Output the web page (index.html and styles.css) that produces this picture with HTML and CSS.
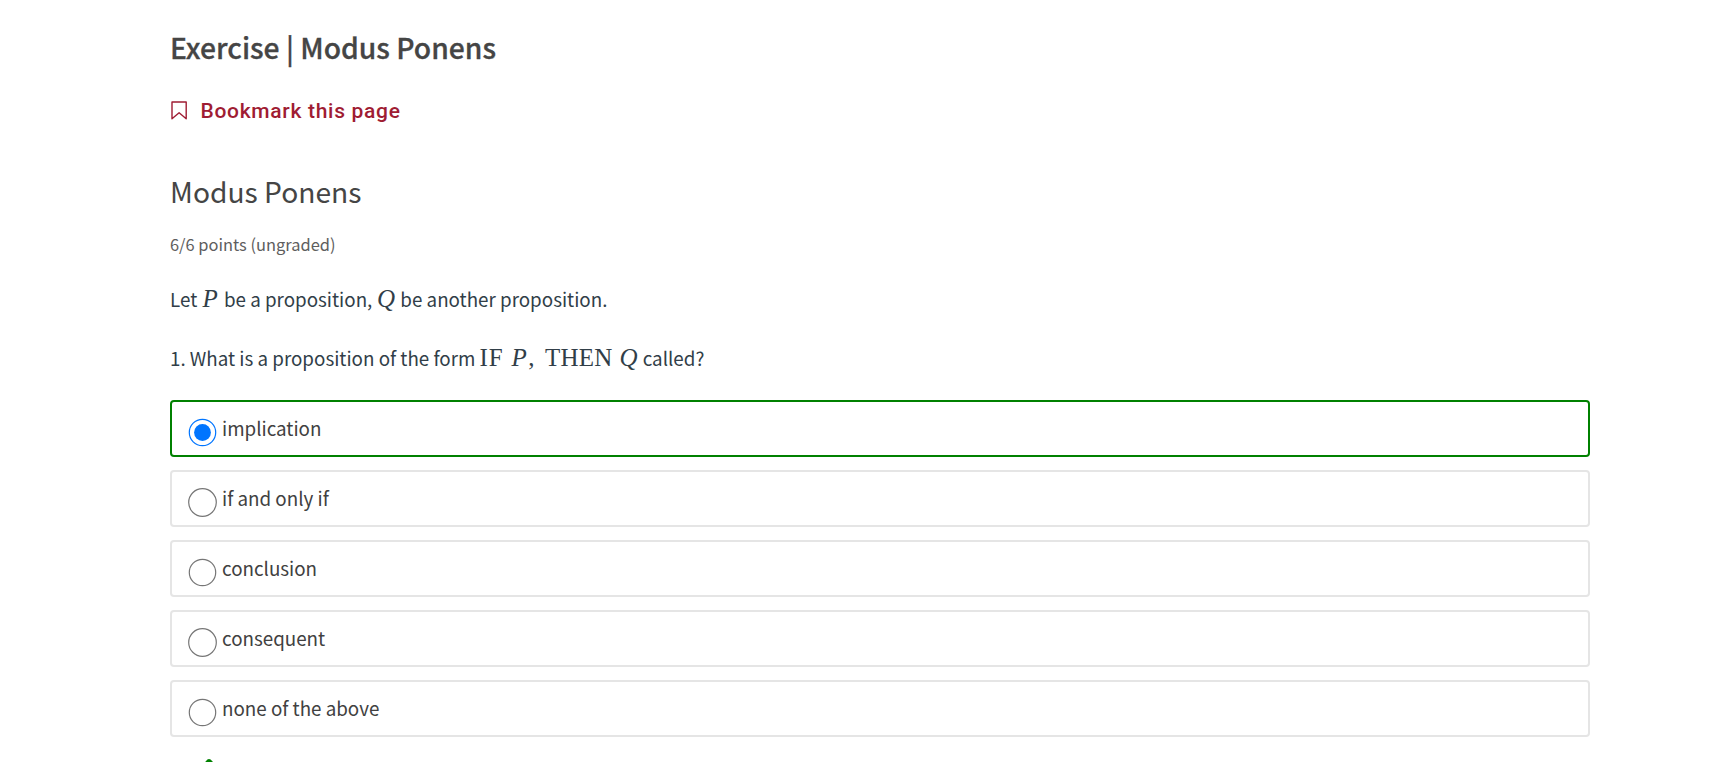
FILE: index.html
```html
<!DOCTYPE html>
<html lang="en">
<head>
<meta charset="utf-8">
<title>Exercise | Modus Ponens</title>
<link rel="stylesheet" href="styles.css">
</head>
<body>
<main class="page">
  <h1 class="title"><span>Exercise | Modus Ponens</span></h1>
  <a class="bookmark">
    <svg class="bookmark-icon" width="16" height="19" viewBox="0 0 16 19" fill="none" stroke="currentColor" stroke-width="1.4"><path d="M1 1H15.2V17.8L8.1 11.8L1 17.8Z" stroke-linejoin="round"/></svg>
    <span>Bookmark this page</span>
  </a>
  <h2 class="subtitle"><span>Modus Ponens</span></h2>
  <p class="points"><span>6/6 points (ungraded)</span></p>
  <p class="text"><span>Let</span> <i class="math p">P</i> <span>be a proposition,</span> <i class="math q">Q</i> <span>be another proposition.</span></p>
  <p class="text question"><span>1. What is a proposition of the form</span> <span class="math if">IF</span><i class="math p p2">P</i><span class="math comma">,</span><span class="math then">THEN</span><i class="math q q2">Q</i> <span>called?</span></p>
  <div class="choices">
    <label class="choice correct"><svg class="radio" width="31" height="31"><circle class="ring" cx="15.5" cy="15.5" r="13.2"/><circle class="dot" cx="15.5" cy="15.5" r="8.4"/></svg><span>implication</span></label>
    <label class="choice"><svg class="radio" width="31" height="31"><circle class="ring" cx="15.5" cy="15.5" r="13.8"/></svg><span>if and only if</span></label>
    <label class="choice"><svg class="radio" width="31" height="31"><circle class="ring" cx="15.5" cy="15.5" r="13.2"/></svg><span>conclusion</span></label>
    <label class="choice"><svg class="radio" width="31" height="31"><circle class="ring" cx="15.5" cy="15.5" r="13.8"/></svg><span>consequent</span></label>
    <label class="choice"><svg class="radio" width="31" height="31"><circle class="ring" cx="15.5" cy="15.5" r="13.2"/></svg><span>none of the above</span></label>
  </div>
  <svg class="check" width="30" height="24" viewBox="0 0 30 24"><path d="M2 13L6 9L11 14L22.4 1.6Q24 0.2 25.6 1.6L29 5L11 22Z" fill="#008100"/></svg>
</main>
</body>
</html>
```
FILE: styles.css
```css
* { box-sizing: border-box; }
html, body { margin: 0; height: 762px; overflow: hidden; background: #fff; }
body { font-family: "Noto Sans CJK SC", "Noto Sans", sans-serif; color: #414141; }
.page { display: flex; flex-direction: column; width: 1420px; margin-left: 170px; padding-top: 27px; }
h1, h2, p { margin: 0; white-space: nowrap; }
.title { font-size: 28.25px; font-weight: 500; line-height: 40px; color: #454545; -webkit-text-stroke: 0.3px #454545; }
.bookmark { display: flex; align-items: center; margin-top: 32px; height: 24px; color: #9f1c33; font: 500 21px/24px Roboto, sans-serif; letter-spacing: 0.7px; }
.bookmark-icon { margin: -2px 13.5px 0 1px; }
.subtitle { margin-top: 48px; font-size: 28.2px; font-weight: 400; line-height: 40px; color: #454545; }
.points { margin-top: 21px; font-size: 16.45px; line-height: 24px; color: #5e5e5e; }
.text { margin-top: 28px; font-size: 18.8px; line-height: 30px; height: 30px; color: #313e48; }
.question { margin-top: 29px; }
.math { font-family: "Liberation Serif", serif; font-size: 25px; line-height: 0; }
.p { letter-spacing: 2px; padding-left: 1px; }
.q { margin-left: 0.5px; letter-spacing: 1px; }
.if { letter-spacing: 0.8px; }
.p2 { margin-left: 7px; letter-spacing: 1.5px; }
.then { margin-left: 10.5px; letter-spacing: 0.2px; }
.q2 { margin-left: 7px; }
.choices { display: flex; flex-direction: column; gap: 13px; margin-top: 27px; }
.choice { display: flex; flex: none; height: 57px; padding: 11px 0 0 15px; border: 2px solid #e5e5e5; border-radius: 4px; font-size: 18.8px; line-height: 30px; }
.choice span { margin-left: 4px; }
.correct { border-color: #008100; }
.radio { margin-top: 4px; fill: none; stroke: #767676; stroke-width: 1.2; }
.correct .radio { stroke: #0075ff; }
.correct .dot { fill: #0075ff; stroke: none; }
.check { margin: 21px 0 0 15px; }
```
